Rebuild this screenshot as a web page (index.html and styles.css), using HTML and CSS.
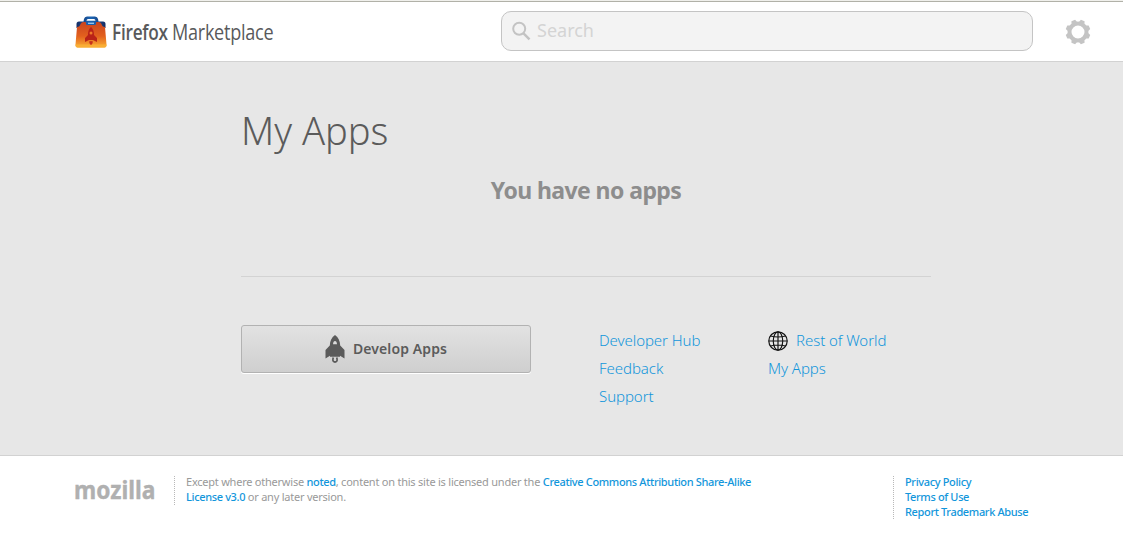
FILE: index.html
```html
<!DOCTYPE html>
<html lang="en">
<head>
<meta charset="utf-8">
<title>My Apps | Firefox Marketplace</title>
<link rel="stylesheet" href="styles.css">
</head>
<body>
<header class="header">
  <a class="brand">
    <svg class="brand-icon" width="34" height="34" viewBox="0 0 34 34">
      <defs>
        <linearGradient id="bag" x1="0" y1="0" x2="0" y2="1"><stop offset="0" stop-color="#c9441f"/><stop offset=".55" stop-color="#e2601e"/><stop offset="1" stop-color="#fbb034"/></linearGradient>
        <linearGradient id="lid" x1="0" y1="0" x2="1" y2="0"><stop offset="0" stop-color="#152c62"/><stop offset=".5" stop-color="#1b65b5"/><stop offset="1" stop-color="#152c62"/></linearGradient>
      </defs>
      <path d="M2.500 13V9q0-2.500 2.500-2.500h4.500l.5-2.500q.5-2.500 3-2.500h8q2.500 0 3 2.500l.5 2.500H29q2.500 0 2.500 2.500v4z" fill="url(#lid)"/>
      <path d="M12.500 5.800q.2-1.800 1.500-1.800h6q1.300 0 1.500 1.800z" fill="#fff"/>
      <path d="M9.500 7h15q2 0 3 2 .7 3 3.500 3l1.500 17.500q0 3-2 3h-27q-2 0-2-3L3 12q2.800 0 3.500-3 1-2 3-2z" fill="url(#bag)"/>
      <path d="M11.500 6.500h11l-1 3.500h-9z" fill="#1c5eaa"/>
      <path d="M14 8.300h6" stroke="#9bcaf0" stroke-width="1.300"/>
      <path d="M1.500 29.500h31v1q0 2-2 2h-27q-2 0-2-2z" fill="#f9ae35"/>
      <path d="M17 12c3 3 3 6 3 8l3 3v4l-4-2h-4l-4 2v-4l3-3c0-2 0-5 3-8z" fill="#b92318"/>
      <circle cx="17" cy="18" r="1.500" fill="#ef7a29"/>
      <path d="M15 26.500q2-1 4 0-.5 3-2 3.500-1.500-.5-2-3.500z" fill="#c6301b"/>
    </svg>
    <span class="brand-name"><b>Firefox</b><span class="brand-light">Marketplace</span></span>
  </a>
  <div class="search">
    <svg width="20" height="20" viewBox="0 0 20 20" fill="none" stroke="#c3c3c3"><circle cx="7.200" cy="7.800" r="6" stroke-width="2"/><path d="M11.500 12.300l6 6" stroke-width="2.500"/></svg>
    <span class="search-text">Search</span>
  </div>
  <svg class="gear" width="26" height="26" viewBox="-13 -13 26 26">
    <circle r="8.500" fill="none" stroke="#c4c4c4" stroke-width="4"/>
    <g fill="#c4c4c4" transform="rotate(22.500)">
      <path id="teeth" d="M-3-9.500l1-2.900h4l1 2.900zM-3 9.500l1 2.900h4l1-2.900zM-9.500-3l-2.900 1v4l2.900 1zM9.500-3l2.900 1v4l-2.900 1z"/>
      <use href="#teeth" transform="rotate(45)"/>
    </g>
  </svg>
</header>
<main class="main">
  <h1 class="title"><span>My Apps</span></h1>
  <p class="empty">You have no apps</p>
  <div class="links-row">
    <a class="develop">
      <svg width="20" height="28" viewBox="0 0 20 28"><path fill="#5b5b5b" fill-rule="evenodd" d="M10 0c3.500 2.500 5 6 5.200 10.500L19.500 15v8.500L15 20.800v1H5v-1L.5 23.500V15l4.300-4.500C5 6 6.500 2.500 10 0zM8 9.200h4Q11.700 6 10 6T8 9.200z"/><path d="M8.300 22.500q-1.500 4.300 1.700 4.500 3.200-.2 1.700-4.500" fill="none" stroke="#5b5b5b" stroke-width="1.800"/></svg>
      <span class="develop-text">Develop Apps</span>
    </a>
    <nav class="col col-dev"><a>Developer Hub</a><a>Feedback</a><a>Support</a></nav>
    <nav class="col"><a class="region"><svg width="20" height="20" viewBox="0 0 20 20" fill="none" stroke="#151515" stroke-width="1.200"><circle cx="10" cy="10" r="9.200"/><ellipse cx="10" cy="10" rx="4.700" ry="9.200"/><path d="M10 .8v18.400M.8 10h18.400M2.500 5q7.500 2 15 0M2.500 15q7.500-2 15 0"/></svg><span>Rest of World</span></a><a>My Apps</a></nav>
  </div>
</main>
<footer class="footer">
  <div class="mozilla"><span>mozilla</span></div>
  <div class="license"><div>Except where otherwise <a>noted</a>, content on this site is licensed under the <a>Creative Commons Attribution Share-Alike</a></div><div><a>License v3.0</a> or any later version.</div></div>
  <nav class="legal"><a>Privacy Policy</a><a>Terms of Use</a><a>Report Trademark Abuse</a></nav>
</footer>
</body>
</html>
```
FILE: styles.css
```css
* { box-sizing: border-box; }
body { margin: 0; height: 554px; overflow: hidden; background: #fff; color: #5b5b5b; font-family: "Noto Sans", sans-serif; }
a { color: #1296db; text-decoration: none; white-space: nowrap; }
.header { height: 62px; display: flex; align-items: flex-start; padding: 10px 32px 0 74px; border-top: 1px solid #f0f0ec; border-bottom: 1px solid #d2d2d2; box-shadow: inset 0 1px 0 #b1b1a8; }
.brand { display: flex; width: 427px; color: #58595b; padding-top: 4px; }
.brand-name { display: flex; gap: 4px; margin-left: 4px; font: 21px/34px "Open Sans", "Noto Sans", sans-serif; }
.brand-name b, .brand-light { display: inline-block; transform-origin: 0 50%; }
.brand-name b { width: 56px; font-weight: 600; transform: scaleX(.82); letter-spacing: -.3px; }
.brand-light { transform: scaleX(.86); letter-spacing: -.3px; }
.search { width: 532px; height: 40px; margin-right: 32px; padding-left: 10px; display: flex; align-items: center; border: 1px solid #c4c4c4; border-radius: 10px; background: #f3f3f3; }
.search-text { margin-left: 5px; padding-bottom: 1px; font-size: 18px; line-height: 37px; color: #d4d4d4; }
.gear { margin-top: 8px; }
.main { height: 394px; padding: 42px 192px 0 241px; background: #e7e7e7; border-bottom: 1px solid #d2d2d2; }
.title { margin: 0; height: 56px; font-size: 39px; font-weight: 300; line-height: 52px; }
.title span { display: inline-block; transform: scaleX(.975); transform-origin: 0 50%; }
.empty { margin: 0; height: 117px; padding-top: 14px; font-size: 23px; line-height: 32px; font-weight: 700; color: #8d8d8d; text-align: center; letter-spacing: -.58px; border-bottom: 1px solid #d3d3d3; }
.links-row { display: flex; margin-top: 48px; }
.develop { width: 290px; height: 48px; display: flex; align-items: center; justify-content: center; gap: 8px; border: 1px solid #b2b2b2; border-radius: 3px; background: linear-gradient(#e2e2e2, #cfcfcf); box-shadow: 0 1px 0 #fff; color: #5b5b5b; font-size: 14px; font-weight: 600; }
.develop-text { padding-bottom: 2px; letter-spacing: .1px; }
.col { display: flex; flex-direction: column; padding-top: 1px; font-size: 15px; line-height: 28px; font-weight: 300; letter-spacing: -.06px; }
.col-dev { width: 169px; margin-left: 68px; flex-shrink: 0; }
.region { display: flex; align-items: center; gap: 8px; height: 28px; }
.region svg { margin-top: 2px; }
.footer { display: flex; padding: 19px 0 0 74px; font-size: 11px; line-height: 15px; letter-spacing: -.23px; color: #999; }
.mozilla { width: 100px; height: 30px; font-size: 25px; line-height: 28px; font-weight: 700; color: #b0b0b0; letter-spacing: 0; }
.mozilla span { display: inline-block; transform: scaleX(.91); transform-origin: 0 50%; -webkit-text-stroke: .4px #b0b0b0; }
.license { width: 719px; height: 29px; border-left: 1px dotted #b8b8b8; padding-left: 11px; margin-top: 1px; white-space: nowrap; }
.license div, .legal a { position: relative; top: -2px; }
.license a, .legal a { color: #1296db; font-weight: 500; letter-spacing: -.35px; }
.legal { display: flex; flex-direction: column; height: 43px; padding-left: 11px; border-left: 1px dotted #b8b8b8; margin-top: 1px; }
```
